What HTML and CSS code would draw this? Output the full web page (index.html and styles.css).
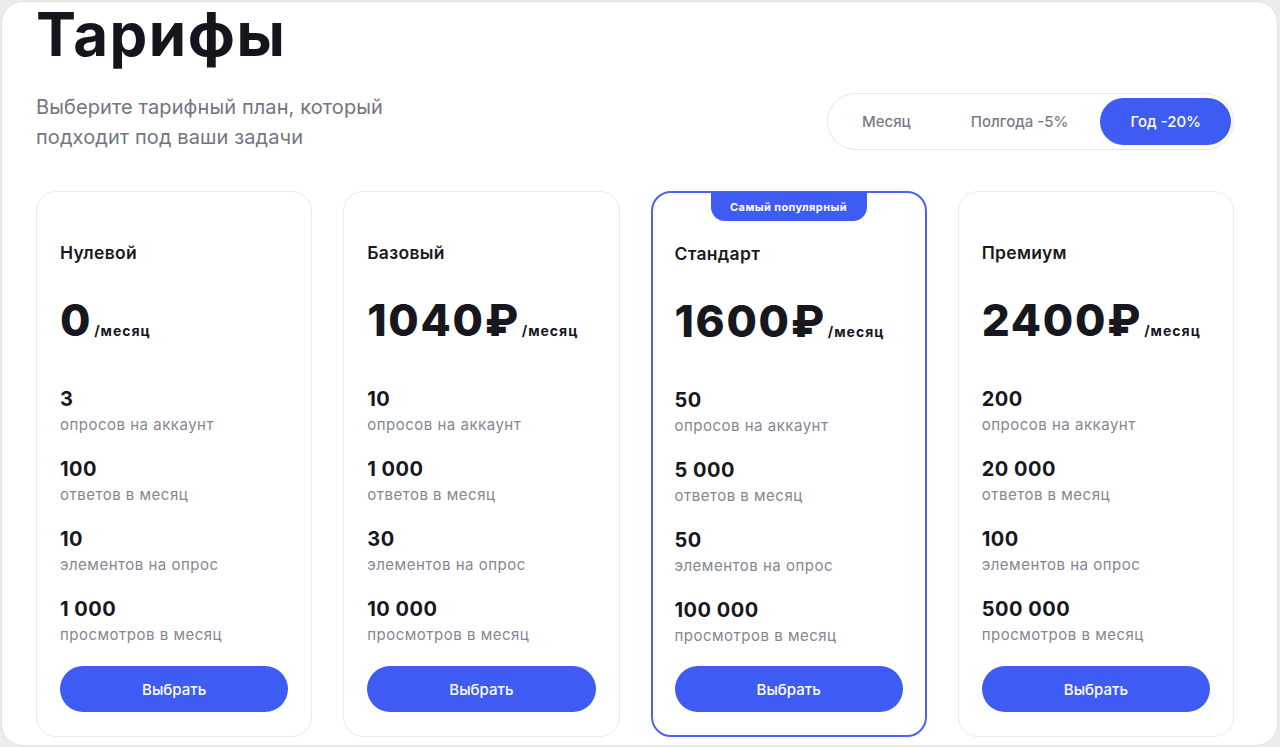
FILE: index.html
```html
<!DOCTYPE html>
<html lang="ru">
<head>
<meta charset="utf-8">
<title>Тарифы</title>
<link rel="stylesheet" href="styles.css">
</head>
<body>
<div class="frame">
  <div class="wrap">
    <h1 class="title">Тарифы</h1>
    <div class="head-row">
      <p class="subtitle">Выберите тарифный план, который<br>подходит под ваши задачи</p>
      <div class="toggle">
        <button class="tg">Месяц</button>
        <button class="tg">Полгода -5%</button>
        <button class="tg tg-active">Год -20%</button>
      </div>
    </div>
    <div class="cards">
      <div class="card">
        <div class="card-name">Нулевой</div>
        <div class="price"><span class="amount">0</span><span class="per">/месяц</span></div>
        <div class="features">
          <div class="feat"><div class="val">3</div><div class="lbl">опросов на аккаунт</div></div>
          <div class="feat"><div class="val">100</div><div class="lbl">ответов в месяц</div></div>
          <div class="feat"><div class="val">10</div><div class="lbl">элементов на опрос</div></div>
          <div class="feat"><div class="val">1 000</div><div class="lbl">просмотров в месяц</div></div>
        </div>
        <button class="choose">Выбрать</button>
      </div>
      <div class="card">
        <div class="card-name">Базовый</div>
        <div class="price"><span class="amount">1040₽</span><span class="per">/месяц</span></div>
        <div class="features">
          <div class="feat"><div class="val">10</div><div class="lbl">опросов на аккаунт</div></div>
          <div class="feat"><div class="val">1 000</div><div class="lbl">ответов в месяц</div></div>
          <div class="feat"><div class="val">30</div><div class="lbl">элементов на опрос</div></div>
          <div class="feat"><div class="val">10 000</div><div class="lbl">просмотров в месяц</div></div>
        </div>
        <button class="choose">Выбрать</button>
      </div>
      <div class="card card-popular">
        <div class="badge">Самый популярный</div>
        <div class="card-name">Стандарт</div>
        <div class="price"><span class="amount">1600₽</span><span class="per">/месяц</span></div>
        <div class="features">
          <div class="feat"><div class="val">50</div><div class="lbl">опросов на аккаунт</div></div>
          <div class="feat"><div class="val">5 000</div><div class="lbl">ответов в месяц</div></div>
          <div class="feat"><div class="val">50</div><div class="lbl">элементов на опрос</div></div>
          <div class="feat"><div class="val">100 000</div><div class="lbl">просмотров в месяц</div></div>
        </div>
        <button class="choose">Выбрать</button>
      </div>
      <div class="card">
        <div class="card-name">Премиум</div>
        <div class="price"><span class="amount">2400₽</span><span class="per">/месяц</span></div>
        <div class="features">
          <div class="feat"><div class="val">200</div><div class="lbl">опросов на аккаунт</div></div>
          <div class="feat"><div class="val">20 000</div><div class="lbl">ответов в месяц</div></div>
          <div class="feat"><div class="val">100</div><div class="lbl">элементов на опрос</div></div>
          <div class="feat"><div class="val">500 000</div><div class="lbl">просмотров в месяц</div></div>
        </div>
        <button class="choose">Выбрать</button>
      </div>
    </div>
  </div>
</div>
</body>
</html>
```

FILE: styles.css
```css
* { box-sizing: border-box; }
html, body { margin: 0; padding: 0; }
body {
  background: #ececec;
  font-family: Inter, "Noto Sans", sans-serif;
  color: #17171f;
}
.frame {
  margin: 1px 0 0 1px;
  width: 1277px;
  height: 745px;
  background: #ffffff;
  border: 1px solid #e2e2e6;
  border-radius: 22px;
  padding: 2px 0 0 34px;
  overflow: hidden;
}
.wrap { width: 1198px; }
.title {
  margin: 0;
  font-size: 60px;
  line-height: 60px;
  font-weight: 700;
  letter-spacing: 1.5px;
  color: #15151d;
}
.head-row {
  margin-top: 28px;
  display: flex;
  justify-content: space-between;
  align-items: flex-start;
}
.subtitle {
  margin: 0;
  font-size: 20px;
  line-height: 30px;
  letter-spacing: 0.1px;
  color: #74747f;
}
.toggle {
  margin-top: 1px;
  display: flex;
  height: 57px;
  padding: 4px 2px 4px 4px;
  border: 1px solid #e6e6ec;
  border-radius: 29px;
  background: #fff;
}
.tg {
  border: 0;
  background: transparent;
  font-family: inherit;
  font-size: 15px;
  font-weight: 500;
  color: #7b7b86;
  padding: 0 30px;
  border-radius: 24px;
  cursor: pointer;
}
.tg-active {
  margin-left: 2px;
  background: #3e5bf4;
  color: #fff;
}
.cards {
  margin-top: 39px;
  display: grid;
  grid-template-columns: repeat(4, 1fr);
  gap: 31px;
}
.card {
  position: relative;
  height: 546px;
  border: 1px solid #eaeaee;
  border-radius: 20px;
  padding: 50px 23px 24px;
  display: flex;
  flex-direction: column;
  background: #fff;
}
.card-popular {
  border: 2px solid #4a63f2;
  padding: 50px 22px 23px;
}
.badge {
  position: absolute;
  top: -1px;
  left: 58px;
  width: 156px;
  height: 29px;
  background: #3e5bf4;
  color: #fff;
  font-size: 11px;
  font-weight: 700;
  letter-spacing: 0.4px;
  display: flex;
  align-items: center;
  justify-content: center;
  border-radius: 0 0 14px 14px;
}
.card-name {
  font-size: 17.5px;
  line-height: 22px;
  font-weight: 600;
  letter-spacing: 0.3px;
  color: #1a1a22;
}
.price {
  margin-top: 30px;
  display: flex;
  align-items: baseline;
  gap: 2px;
  height: 52px;
}
.amount {
  font-size: 44px;
  line-height: 52px;
  font-weight: 800;
  letter-spacing: 1.7px;
  color: #17171f;
}
.per {
  font-size: 14px;
  font-weight: 700;
  letter-spacing: 1px;
  color: #17171f;
}
.features {
  margin-top: 41px;
  display: flex;
  flex-direction: column;
  gap: 22px;
}
.val {
  font-size: 20px;
  line-height: 24px;
  font-weight: 700;
  letter-spacing: 0.5px;
  color: #17171f;
}
.lbl {
  margin-top: 4px;
  font-size: 15px;
  line-height: 20px;
  letter-spacing: 0.5px;
  color: #868691;
}
.choose {
  margin-top: auto;
  height: 46px;
  width: 100%;
  border: 0;
  border-radius: 23px;
  background: #3e5bf4;
  color: #fff;
  font-family: inherit;
  font-size: 15px;
  font-weight: 500;
  cursor: pointer;
}
```
